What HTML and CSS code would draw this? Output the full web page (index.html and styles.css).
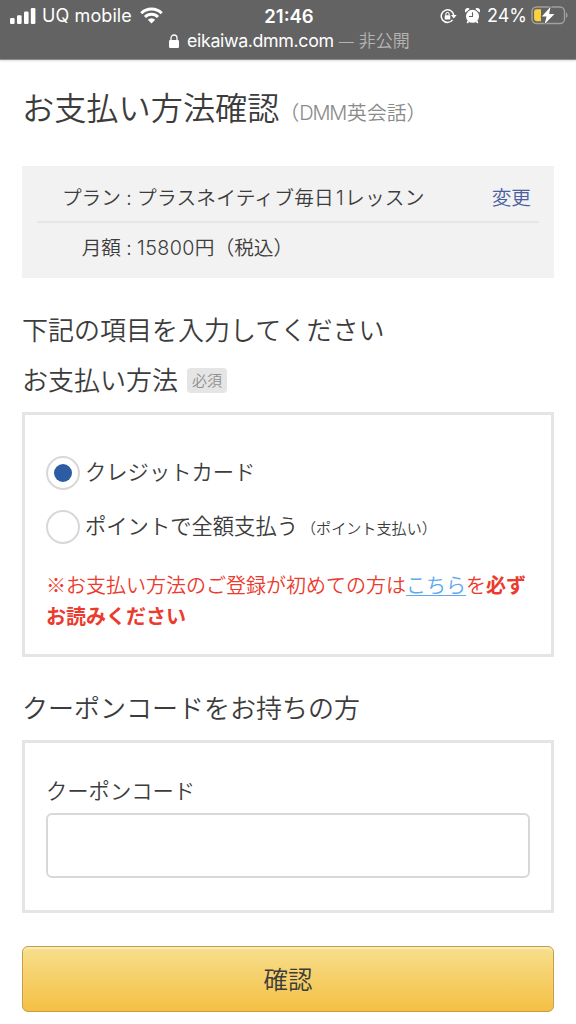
FILE: index.html
```
<!DOCTYPE html>
<html lang="ja">
<head>
<meta charset="utf-8">
<title>お支払い方法確認</title>
<link rel="stylesheet" href="styles.css">
</head>

<body>

<div id="header">
	<div class="status">
		<div class="status-left">
			<svg class="signal" width="26" height="16" viewBox="0 0 26 16" fill="#fff">
				<rect x="0" y="10" width="4.6" height="6" rx="1.2"/>
				<rect x="7" y="7.2" width="4.6" height="8.8" rx="1.2"/>
				<rect x="14" y="3.6" width="4.6" height="12.4" rx="1.2"/>
				<rect x="20.8" y="0" width="4.6" height="16" rx="1.2"/>
			</svg>
			<span class="carrier">UQ mobile</span>
			<svg class="wifi" width="23" height="17" viewBox="0 0 24 18" fill="none" stroke="#fff" stroke-width="3.2">
				<path d="M1.2 6.6a15.3 15.3 0 0 1 21.6 0"/>
				<path d="M5.1 10.6a9.8 9.8 0 0 1 13.8 0"/>
				<path d="M12 17.6l-3.9-4a5.5 5.5 0 0 1 7.8 0z" fill="#fff" stroke="none"/>
			</svg>
		</div>
		<span class="time">21:46</span>
		<div class="status-right">
			<svg class="rotation" width="17" height="16" viewBox="0 0 17 16" fill="none" stroke="#fff" stroke-width="1.5">
				<path d="M12.6 11.9a6.3 6.3 0 1 1 1.2-4.6"/>
				<path d="M11 7h5.6l-2.8 3.6z" fill="#fff" stroke="none"/>
				<rect x="4.7" y="7.2" width="5.6" height="4.2" rx=".6" fill="#fff" stroke="none"/>
				<path d="M5.9 7.5V6.100a1.600 1.600 0 0 1 3.200 0v1.400" stroke-width="1.1"/>
			</svg>
			<svg class="alarm" width="15" height="16" viewBox="0 0 15 16" fill="#fff">
				<circle cx="7.5" cy="8.3" r="6.5"/>
				<path d="M.5 4.600a2.700 2.700 0 0 1 4.200-3.500z"/>
				<path d="M14.500 4.600a2.700 2.700 0 0 0-4.200-3.500z"/>
				<path d="M2.600 12.500l1.600 1.300-1.300 1.600-1.300-1z"/>
				<path d="M12.400 12.500l-1.600 1.300 1.300 1.600 1.300-1z"/>
				<path d="M7.500 4.200v4.300H3.900" fill="none" stroke="#636363" stroke-width="1.1"/>
			</svg>
			<span class="percent">24%</span>
			<svg class="battery" width="37" height="19" viewBox="0 0 37 19">
				<rect x="1" y="1" width="32.5" height="16.500" rx="4.5" fill="none" stroke="#a3a09e" stroke-width="1.4"/>
				<path d="M35 6.500c2 .8 2 4.700 0 5.500z" fill="#a3a09e"/>
				<path d="M5.500 3.200H10v12H5.500a2.400 2.400 0 0 1-2.400-2.400V5.600a2.400 2.400 0 0 1 2.400-2.400z" fill="#fbd13c"/>
				<path d="M19.600.8L10.800 10.500h4.800L13.500 18.200l10-10.300h-5.400z" fill="#fff" stroke="#636060" stroke-width="1.4" paint-order="stroke"/>
			</svg>
		</div>
	</div>
	<div class="address">
		<svg class="lock" width="10" height="14" viewBox="0 0 10 14">
			<rect x="0" y="6" width="10" height="8" rx="1.3" fill="#fff"/>
			<path d="M2 6.500V4a3 3 0 0 1 6 0v2.500" fill="none" stroke="#fff" stroke-width="1.3"/>
		</svg>
		<span class="domain">eikaiwa.dmm.com</span>
		<span class="private"><span class="dash">—</span>非公開</span>
	</div>
</div>

<div id="main">
	<h1>お支払い方法確認<span class="service">（<span class="latin">DMM</span>英会話）</span></h1>

	<div class="plan">
		<div class="plan-row">
			<span class="plan-label">プラン</span><span class="colon">:</span>
			<span class="plan-name">プラスネイティブ毎日<span class="num">1</span>レッスン</span>
			<a class="change">変更</a>
		</div>
		<div class="plan-row">
			<span class="plan-label">月額</span><span class="colon">:</span>
			<span class="plan-price"><span class="num">15800</span>円（税込）</span>
		</div>
	</div>

	<h2>下記の項目を入力してください</h2>
	<h2 class="method">お支払い方法<span class="required">必須</span></h2>
	<div class="box payment">
		<div class="choice"><span class="radio checked"></span><span class="choice-text">クレジットカード</span></div>
		<div class="choice"><span class="radio"></span><span class="choice-text">ポイントで全額支払う<small>（ポイント支払い）</small></span></div>
		<p class="notice">※お支払い方法のご登録が初めての方は<a class="here">こちら</a>を<b>必ず<br>お読みください</b></p>
	</div>

	<h2 class="coupon-title">クーポンコードをお持ちの方</h2>
	<div class="box coupon">
		<label for="code">クーポンコード</label>
		<input id="code" type="text" autocomplete="off">
	</div>

	<button class="submit">確認</button>
</div>

</body>
</html>
```
FILE: styles.css
```
* {
	box-sizing: border-box;
}
body {
	margin: 0;
	background: #fff;
	color: #3c3c3c;
	font-family: "Noto Sans CJK JP", sans-serif;
	font-weight: 350;
}

/* status bar and address */
#header {
	height: 60px;
	background: #636363;
	border-bottom: 1px solid #8c8c8c;
	box-shadow: 0 1px 2px #ddd;
	color: #fff;
	font-family: Inter, "Noto Sans CJK JP", sans-serif;
	font-size: 18px;
}
.status {
	display: grid;
	grid-template-columns: 1fr auto 1fr;
	align-items: center;
	height: 31px;
	padding: 0 8px 0 10px;
}
.status-left, .status-right {
	display: flex;
	align-items: center;
}
.status-right {
	justify-content: flex-end;
}
.carrier {
	margin: 0 8px 0 6px;
	letter-spacing: 0.1px;
	font-weight: 400;
}
.time {
	font-size: 18.5px;
	font-weight: 600;
}
.alarm {
	margin: 0 7px 0 8px;
}
.percent {
	margin-right: 4px;
	font-weight: 400;
}
.address {
	display: flex;
	align-items: center;
	height: 20px;
	line-height: 20px;
	padding-left: 169px;
}
.domain {
	margin: 0 5px 0 8px;
	font-size: 17.8px;
	letter-spacing: -0.35px;
	font-weight: 400;
}
.private {
	color: #b4b4b4;
	font-size: 17px;
}
.dash {
	margin-right: 5px;
	font-size: 15px;
}

#main {
	padding: 24px 22px 0;
}
h1, h2 {
	margin: 0;
	font-weight: 350;
}
h1 {
	height: 44px;
	line-height: 44px;
	font-size: 32.2px;
}
.service {
	color: #8a8a8a;
	font-size: 19.8px;
}
.latin, .num {
	font-family: Inter, sans-serif;
	font-weight: 300;
}
.latin {
	font-size: 20px;
	letter-spacing: -1.2px;
	margin-right: 1px;
}

/* selected plan */
.plan {
	height: 112px;
	margin-top: 38px;
	padding: 6px 15px;
	background: #f2f2f2;
}
.plan-row {
	display: flex;
	align-items: center;
	height: 51px;
	font-size: 19.7px;
}
.plan-row:first-child {
	padding-bottom: 1px;
	border-bottom: 2px solid #e6e6e6;
}
.plan-row:last-child {
	height: 47px;
}
.plan-label {
	width: 84px;
	text-align: right;
}
.colon {
	width: 16px;
	text-align: center;
	font-weight: 300;
}
.num {
	letter-spacing: 0.4px;
}
.plan-name {
	letter-spacing: 0.2px;
}
.plan-name .num {
	margin: 0 1px 0 2px;
}
.change {
	margin-left: auto;
	padding-right: 8px;
	color: #4a609f;
}

/* form */
h2 {
	height: 50px;
	margin-top: 26px;
	line-height: 50px;
	font-size: 26px;
}
.method {
	display: flex;
	align-items: center;
	margin-top: 0;
}
.required {
	width: 40px;
	height: 25px;
	margin: 2px 0 0 9px;
	border-radius: 4px;
	background: #e5e5e5;
	color: #909090;
	font-size: 15px;
	line-height: 24px;
	text-align: center;
}
.box {
	border: 3px solid #e5e5e5;
}
.payment {
	height: 245px;
	margin-top: 8px;
	padding: 31px 21px 0;
}
.choice {
	display: flex;
	align-items: center;
	height: 54px;
	font-size: 21.3px;
}
.choice-text {
	padding-bottom: 5px;
}
.choice small {
	margin-left: 3px;
	font-size: 15.1px;
}
.radio {
	display: flex;
	align-items: center;
	justify-content: center;
	width: 34px;
	height: 34px;
	margin-right: 5px;
	border: 2px solid #d8d8d8;
	border-radius: 50%;
}
.checked::after {
	content: "";
	width: 18px;
	height: 18px;
	border-radius: 50%;
	background: #2c5ca2;
}
.notice {
	margin: 15px 0 0;
	color: #eb3b2e;
	font-size: 20px;
	line-height: 31px;
	white-space: nowrap;
}
.notice b {
	font-weight: 700;
}
.here {
	color: #5fa9ee;
	text-decoration: underline;
	text-decoration-thickness: 1px;
	text-underline-offset: 2px;
}
.coupon-title {
	margin-top: 25px;
}
.coupon {
	height: 173px;
	margin-top: 8px;
	padding: 31px 21px 0;
}
.coupon label {
	display: block;
	height: 31px;
	line-height: 31px;
	font-size: 21.3px;
}
.coupon input {
	display: block;
	width: 100%;
	height: 65px;
	margin-top: 8px;
	border: 2px solid #d8d8d8;
	border-radius: 6px;
	background: #fff;
}
.submit {
	display: block;
	width: 100%;
	height: 66px;
	margin-top: 33px;
	padding: 0 0 1px;
	border: 1px solid #cb9a45;
	border-radius: 6px;
	background: linear-gradient(#f7df8e, #f4c043);
	box-shadow: inset 0 2px 1px #faeab8;
	color: #3c3c3c;
	font-family: inherit;
	font-size: 24.5px;
	font-weight: 350;
}
```
